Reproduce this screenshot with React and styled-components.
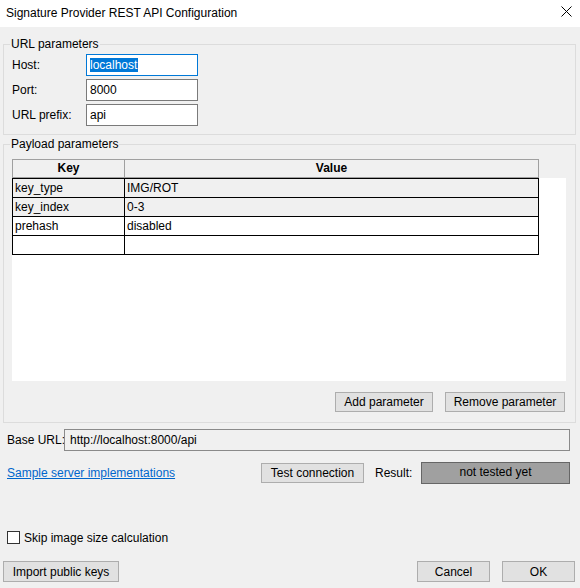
import React from "react";
import styled, { createGlobalStyle } from "styled-components";

const GlobalStyle = createGlobalStyle`
  html, body {
    margin: 0;
    padding: 0;
    background: #f0f0f0;
  }
  * {
    box-sizing: border-box;
  }
`;

const rows = [
  { key: "key_type", value: "IMG/ROT", locked: true },
  { key: "key_index", value: "0-3", locked: true },
  { key: "prehash", value: "disabled", locked: false },
  { key: "", value: "", locked: false },
];

function App() {
  return (
    <Window>
      <GlobalStyle />
      <TitleBar>
        <Title>Signature Provider REST API Configuration</Title>
        <CloseButton>
          <svg width="11" height="11" viewBox="0 0 11 11">
            <path d="M0.5 0.5 L10.5 10.5 M10.5 0.5 L0.5 10.5" stroke="#000" strokeWidth="1" />
          </svg>
        </CloseButton>
      </TitleBar>

      <Body>
        <Group>
          <Legend>URL parameters</Legend>
          <UrlGrid>
            <FieldLabel>Host:</FieldLabel>
            <TextInput $focused>
              <Selected>localhost</Selected>
            </TextInput>
            <FieldLabel>Port:</FieldLabel>
            <TextInput>8000</TextInput>
            <FieldLabel>URL prefix:</FieldLabel>
            <TextInput>api</TextInput>
          </UrlGrid>
        </Group>

        <Group $gap>
          <Legend>Payload parameters</Legend>
          <PayloadContent>
            <HeaderRow>
              <HeaderCell>Key</HeaderCell>
              <HeaderCell $divider>Value</HeaderCell>
            </HeaderRow>
            <Viewport>
              <RowsTable>
                {rows.map((r, i) => (
                  <Row key={i} $locked={r.locked}>
                    <Cell>{r.key}</Cell>
                    <Cell $divider>{r.value}</Cell>
                  </Row>
                ))}
              </RowsTable>
            </Viewport>
            <ButtonRow>
              <Button $w={98}>Add parameter</Button>
              <Button $w={120}>Remove parameter</Button>
            </ButtonRow>
          </PayloadContent>
        </Group>

        <BaseUrlRow>
          <InlineLabel>Base URL:</InlineLabel>
          <ReadOnlyField>http://localhost:8000/api</ReadOnlyField>
        </BaseUrlRow>

        <TestRow>
          <Link href="#">Sample server implementations</Link>
          <TestCluster>
            <Button $w={103}>Test connection</Button>
            <ResultLabel>Result:</ResultLabel>
            <ResultBox>not tested yet</ResultBox>
          </TestCluster>
        </TestRow>

        <Spacer />

        <CheckRow>
          <CheckBox />
          <span>Skip image size calculation</span>
        </CheckRow>

        <FooterRow>
          <Button $w={116} $h={21}>Import public keys</Button>
          <FooterRight>
            <Button $w={73} $h={21}>Cancel</Button>
            <Button $w={73} $h={21}>OK</Button>
          </FooterRight>
        </FooterRow>
      </Body>
    </Window>
  );
}

const Window = styled.div`
  width: 580px;
  height: 588px;
  display: flex;
  flex-direction: column;
  background: #f0f0f0;
  font-family: "Liberation Sans", Arial, sans-serif;
  font-size: 12px;
  color: #000;
  overflow: hidden;
`;

const TitleBar = styled.div`
  height: 27px;
  flex: none;
  background: #fff;
  display: flex;
  align-items: center;
  justify-content: space-between;
  padding: 0 8px 2px 6px;
`;

const Title = styled.span`
  font-size: 12px;
`;

const CloseButton = styled.div`
  width: 11px;
  height: 11px;
  display: flex;
  margin-top: -3px;
`;

const Body = styled.div`
  flex: 1;
  display: flex;
  flex-direction: column;
  padding: 9px 4px 6px 3px;
`;

const Group = styled.fieldset`
  margin: ${(p) => (p.$gap ? "1px" : "0")} 0 0 0;
  padding: 0;
  min-width: 0;
  border: 1px solid #dcdcdc;
`;

const Legend = styled.legend`
  margin-left: 6px;
  padding: 0 1px;
  line-height: 16px;
  font-size: 12px;
`;

const UrlGrid = styled.div`
  display: grid;
  grid-template-columns: 74px 112px;
  grid-auto-rows: 22px;
  row-gap: 3px;
  align-items: center;
  padding: 2px 8px 8px 8px;
`;

const FieldLabel = styled.span`
  line-height: 22px;
`;

const TextInput = styled.div`
  height: 22px;
  border: 1px solid ${(p) => (p.$focused ? "#0078d7" : "#7a7a7a")};
  background: #fff;
  padding: 0 3px;
  line-height: 20px;
  white-space: nowrap;
`;

const Selected = styled.span`
  display: inline-block;
  background: #0078d7;
  color: #fff;
  line-height: 14px;
  padding: 0 1px 0 0;
`;

const PayloadContent = styled.div`
  display: flex;
  flex-direction: column;
  padding: 7px 9px 10px 8px;
`;

const HeaderRow = styled.div`
  width: 527px;
  height: 19px;
  display: grid;
  grid-template-columns: 111px 1fr;
  border: 1px solid #a0a0a0;
  background: #f0f0f0;
`;

const HeaderCell = styled.div`
  text-align: center;
  font-weight: bold;
  line-height: 17px;
  border-left: ${(p) => (p.$divider ? "1px solid #a0a0a0" : "none")};
`;

const Viewport = styled.div`
  height: 203px;
  background: #fff;
`;

const RowsTable = styled.div`
  width: 527px;
  border-bottom: 1px solid #000;
`;

const Row = styled.div`
  height: 19px;
  display: grid;
  grid-template-columns: 111px 1fr;
  border: 1px solid #000;
  border-bottom: none;
  background: ${(p) => (p.$locked ? "#f0f0f0" : "#fff")};
`;

const Cell = styled.div`
  padding-left: 2px;
  line-height: 19px;
  white-space: nowrap;
  border-left: ${(p) => (p.$divider ? "1px solid #000" : "none")};
`;

const ButtonRow = styled.div`
  display: flex;
  justify-content: flex-end;
  gap: 12px;
  margin-top: 11px;
  padding-right: 1px;
`;

const Button = styled.button`
  width: ${(p) => p.$w}px;
  height: ${(p) => p.$h || 20}px;
  padding: 0;
  background: #e1e1e1;
  border: 1px solid #adadad;
  font-family: "Liberation Sans", Arial, sans-serif;
  font-size: 12px;
  color: #000;
  white-space: nowrap;
`;

const BaseUrlRow = styled.div`
  display: flex;
  align-items: center;
  margin: 6px 6px 0 4px;
  height: 22px;
`;

const InlineLabel = styled.span`
  width: 57px;
  flex: none;
  white-space: nowrap;
`;

const ReadOnlyField = styled.div`
  flex: 1;
  height: 22px;
  border: 1px solid #8a8a8a;
  background: #f0f0f0;
  padding: 0 5px;
  line-height: 20px;
`;

const TestRow = styled.div`
  display: flex;
  align-items: center;
  justify-content: space-between;
  margin: 11px 6px 0 4px;
  height: 22px;
`;

const Link = styled.a`
  color: #0066cc;
  text-decoration: underline;
  white-space: nowrap;
`;

const TestCluster = styled.div`
  display: flex;
  align-items: center;
`;

const ResultLabel = styled.span`
  width: 46px;
  margin-left: 11px;
`;

const ResultBox = styled.div`
  width: 149px;
  height: 22px;
  background: #a0a0a0;
  border: 1px solid #666;
  text-align: center;
  line-height: 19px;
`;

const Spacer = styled.div`
  flex: 1;
`;

const CheckRow = styled.div`
  display: flex;
  align-items: center;
  gap: 4px;
  margin-left: 4px;
  height: 13px;
  white-space: nowrap;
`;

const CheckBox = styled.span`
  width: 13px;
  height: 13px;
  flex: none;
  background: #fff;
  border: 1px solid #333;
`;

const FooterRow = styled.div`
  display: flex;
  justify-content: space-between;
  margin-top: 17px;
  margin-right: 1px;
`;

const FooterRight = styled.div`
  display: flex;
  gap: 12px;
`;

export default App;
